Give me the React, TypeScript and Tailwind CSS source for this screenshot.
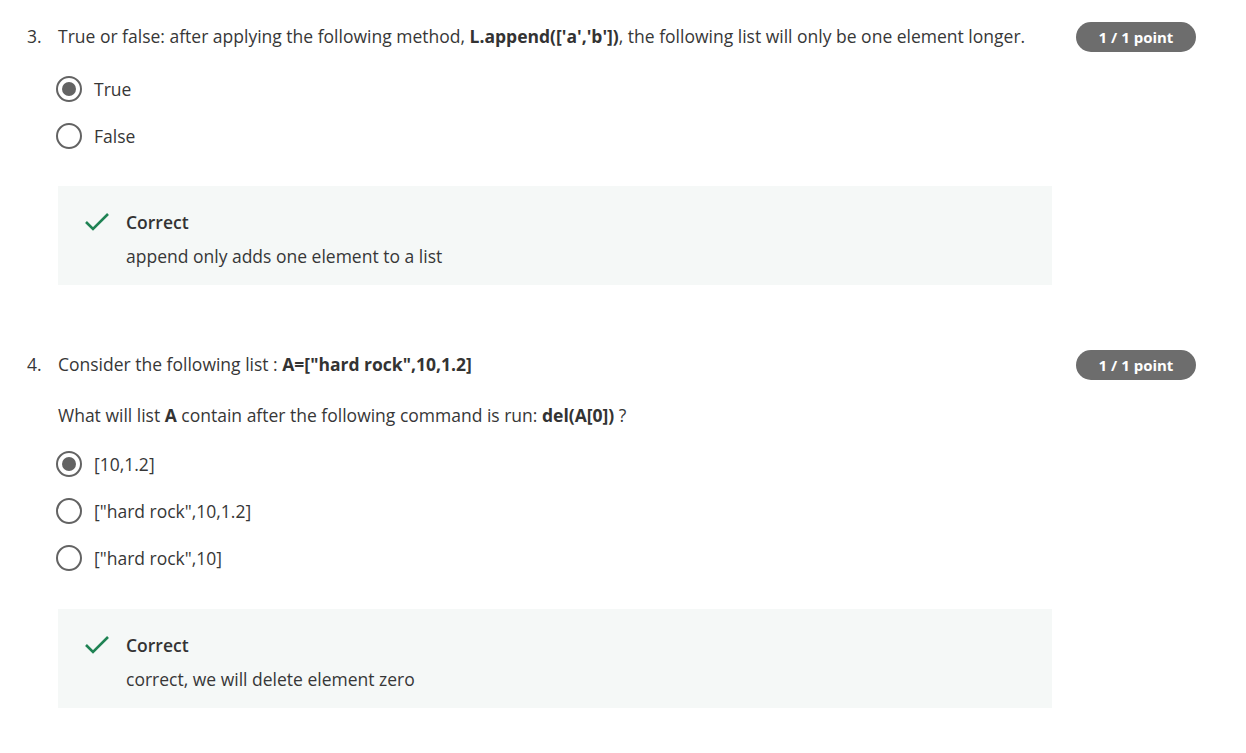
import React from "react";

type Option = { label: string; selected?: boolean };

function Radio({ selected }: { selected?: boolean }) {
  return (
    <span className="flex h-[26px] w-[26px] shrink-0 items-center justify-center rounded-full border-[2.5px] border-[#636363]">
      {selected && <span className="h-[14px] w-[14px] rounded-full bg-[#636363]" />}
    </span>
  );
}

function Options({ options }: { options: Option[] }) {
  return (
    <div className="flex flex-col gap-[21px]">
      {options.map((o) => (
        <div key={o.label} className="flex h-[26px] items-center gap-[12px]">
          <Radio selected={o.selected} />
          <span className="text-[17.5px] text-[#373737]">{o.label}</span>
        </div>
      ))}
    </div>
  );
}

function Feedback({ text }: { text: string }) {
  return (
    <div className="flex w-[994px] gap-[16px] bg-[#f5f8f7] pb-[14px] pl-[26px] pt-[21px]">
      <svg width="26" height="24" viewBox="0 0 26 24" className="mt-[2px] shrink-0">
        <path d="M2 13 L9 20 L24 5" fill="none" stroke="#1f8354" strokeWidth="2.6" />
      </svg>
      <div className="flex flex-col">
        <span className="text-[17.5px] font-semibold leading-[30px] text-[#333]">Correct</span>
        <span className="mt-[4px] text-[17.5px] leading-[30px] text-[#373737]">{text}</span>
      </div>
    </div>
  );
}

function Badge() {
  return (
    <span className="flex h-[30px] w-[120px] shrink-0 items-center justify-center rounded-full bg-[#6d6d6d] text-[15px] font-bold text-white">
      1 / 1 point
    </span>
  );
}

export default function App() {
  return (
    <div
      className="min-h-screen bg-white pl-[27px] pr-[50px] pt-[21px]"
      style={{ fontFamily: '"Open Sans", "Noto Sans", sans-serif' }}
    >
      <div className="flex">
        <span className="w-[31px] shrink-0 text-[17.5px] leading-[30px] text-[#373737]">3.</span>
        <div className="flex flex-col">
          <p className="text-[17.5px] leading-[30px] text-[#373737]">
            True or false: after applying the following method,{" "}
            <b className="font-bold text-[#333]">L.append(['a','b'])</b>, the following list will only be one element longer.
          </p>
          <div className="ml-[-2px] mt-[25px]">
            <Options options={[{ label: "True", selected: true }, { label: "False" }]} />
          </div>
          <div className="mt-[37px]">
            <Feedback text="append only adds one element to a list" />
          </div>
        </div>
        <div className="ml-auto pt-[1px]">
          <Badge />
        </div>
      </div>

      <div className="mt-[64px] flex">
        <span className="w-[31px] shrink-0 text-[17.5px] leading-[30px] text-[#373737]">4.</span>
        <div className="flex flex-col">
          <p className="text-[17.5px] leading-[30px] text-[#373737]">
            Consider the following list : <b className="font-bold text-[#333]">A=["hard rock",10,1.2]</b>
          </p>
          <p className="mt-[21px] text-[17.5px] leading-[30px] text-[#373737]">
            What will list <b className="font-bold text-[#333]">A</b> contain after the following command is run:{" "}
            <b className="font-bold text-[#333]">del(A[0])</b> ?
          </p>
          <div className="ml-[-2px] mt-[21px]">
            <Options
              options={[
                { label: "[10,1.2]", selected: true },
                { label: '["hard rock",10,1.2]' },
                { label: '["hard rock",10]' },
              ]}
            />
          </div>
          <div className="mt-[38px]">
            <Feedback text="correct, we will delete element zero" />
          </div>
        </div>
        <div className="ml-auto pt-[1px]">
          <Badge />
        </div>
      </div>
    </div>
  );
}
